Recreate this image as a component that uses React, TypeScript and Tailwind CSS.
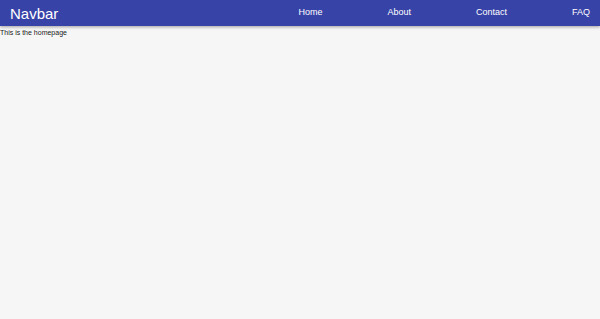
import React from 'react'

const links = ['Home', 'About', 'Contact', 'FAQ']

export default function App() {
  return (
    <div className="min-h-[319px] bg-[#f6f6f6] font-['Liberation_Sans',Arial,sans-serif]">
      <header className="flex h-[26px] items-center bg-[#3843a8] px-[10px] text-white shadow-[0_1px_3px_rgba(0,0,0,0.35)]">
        <div className="text-[15px] leading-none">Navbar</div>
        <nav className="ml-auto flex gap-[65px] text-[9px]">
          {links.map(l => (
            <a key={l} href="#" className="text-white">{l}</a>
          ))}
        </nav>
      </header>
      <div className="pt-[2px] text-[7px] leading-[10px] text-[#222]">This is the homepage</div>
    </div>
  )
}
